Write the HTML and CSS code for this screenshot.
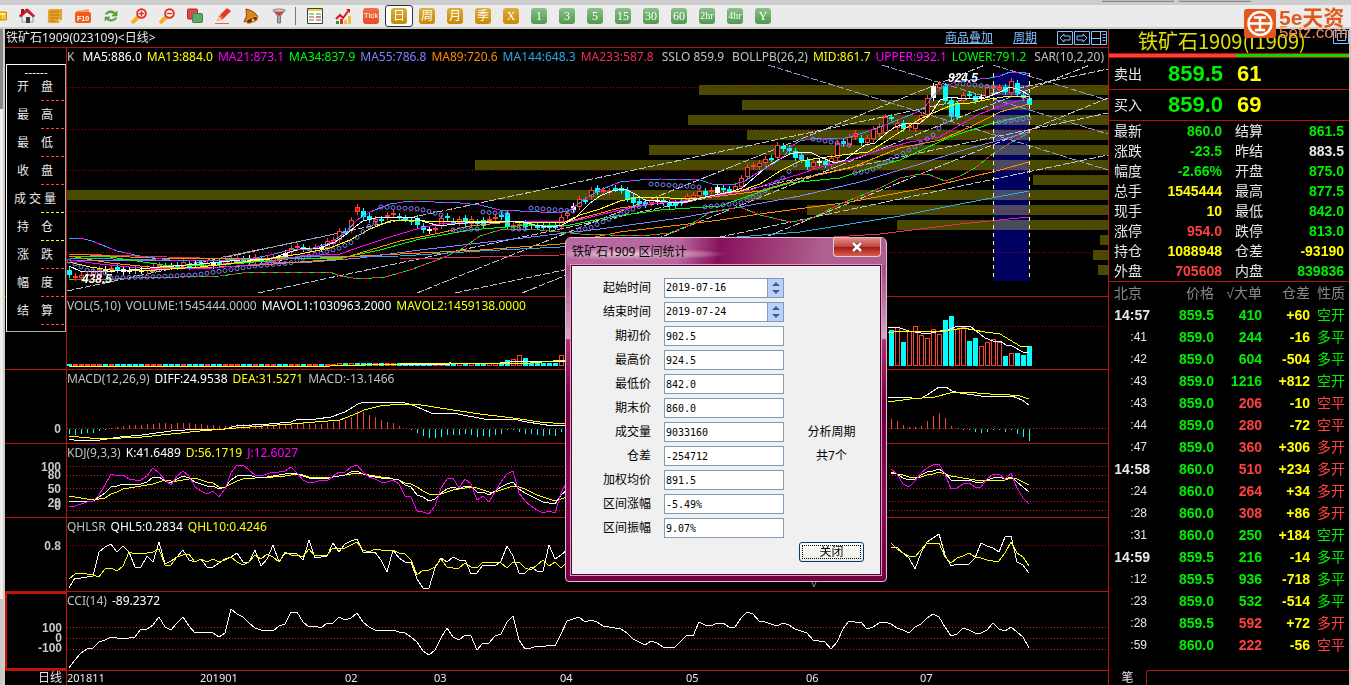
FILE: index.html
```html
<!DOCTYPE html>
<html lang="zh-CN">
<head>
<meta charset="utf-8">
<title>铁矿石1909</title>
<link rel="stylesheet" href="styles.css">
</head>
<body>
<header class="chrome"><span class="chrome-tab"></span><span class="chrome-tab"></span></header>
<nav class="toolbar">
  <svg class="back" width="7" height="14" viewBox="0 0 7 14"><path d="M0 3h6.500v8H0z" fill="#f8c830" stroke="#c08a10"/><path d="M0 5h5" stroke="#fff080" stroke-width="2"/></svg>
  <button class="tool"><svg viewBox="0 0 16 16"><path d="M3 8v6h11V8L8 3z" fill="#eceff2" stroke="#99a"/><path d="M0 8 7 1l2 0 7 7-2 1-6-5-6 5z" fill="#d42030" stroke="#9c1020" stroke-width=".5"/><path d="M2 1h3v4l-3 2z" fill="#b01020"/><path d="M7 9h4v6H7z" fill="#403838"/></svg></button>
  <button class="tool"><svg viewBox="0 0 16 16"><path d="M2 1h12q2 0 1 3v7l-4 4H2q-2-1-1-4V3z" fill="#e8a428"/><path d="M3 4h9M3 7h9M3 10h8M3 13h5" stroke="#b87810"/><path d="m11 15 4-4h-4z" fill="#fff0b0" stroke="#b87810" stroke-width=".5"/></svg></button>
  <button class="tool"><svg viewBox="0 0 16 16"><path d="M1 3 14 1v3H1z" fill="#f8a070"/><rect y="4" width="16" height="11" rx="2" fill="#ee5c18"/><text class="f10" x="8" y="13" text-anchor="middle">F10</text></svg></button>
  <button class="tool"><svg viewBox="0 0 16 16"><path d="M2 6q5-6 11-1l1-2v5H9l2-2Q7 3 4 6zM14 10q-5 6-11 1l-1 2V9h5l-2 2q4 2 7-1z" fill="#5aa838" stroke="#38801c" stroke-width=".5"/></svg></button>
  <button class="tool"><svg viewBox="0 0 16 16"><path d="m1 15 6-6" stroke="#f8b020" stroke-width="4"/><circle cx="10.500" cy="5.500" r="4.300" fill="#fff" stroke="#e03028" stroke-width="2"/><path d="M8 5.500h5M10.500 3v5" stroke="#e03028" stroke-width="1.500"/></svg></button>
  <button class="tool"><svg viewBox="0 0 16 16"><path d="m1 15 6-6" stroke="#f8b020" stroke-width="4"/><circle cx="10.500" cy="5.500" r="4.300" fill="#fff" stroke="#e03028" stroke-width="2"/><path d="M8 5.500h5" stroke="#e03028" stroke-width="1.500"/></svg></button>
  <button class="tool"><svg viewBox="0 0 16 16"><rect x=".5" y="1" width="10" height="10" rx="1" fill="#e04848" stroke="#b02828"/><rect x="5.500" y="5.500" width="10" height="9" rx="1" fill="#60a868" stroke="#3c8048"/></svg></button>
  <button class="tool"><svg viewBox="0 0 16 16"><path d="m2 13 2-5 8-8 4 3-8 8z" fill="#e83820"/><path d="m5 7 3 3" stroke="#fa9080"/><path d="m2 13 2-5 3 3z" fill="#f8d090"/><path d="M0 15.500h14" stroke="#f06050"/></svg></button>
  <button class="tool"><svg viewBox="0 0 16 16"><path d="M3 1q9 2 12 8L1 14Q5 8 3 1z" fill="#d88420" stroke="#884008"/><ellipse cx="9" cy="12" rx="6" ry="2.500" transform="rotate(-22 9 12)" fill="#702c08" stroke="#e8a030"/><circle cx="10" cy="12" r="1.500" fill="#ffc850"/></svg></button>
  <button class="tool"><svg viewBox="0 0 16 16"><path d="M2 2h12L9.500 8v7h-3V8z" fill="#a8adb0" stroke="#70787c"/><path d="M3 3h10L8 8z" fill="#e02830"/><ellipse cx="8" cy="2.500" rx="6" ry="1.500" fill="#e8c0c0" stroke="#888"/></svg></button>
  <span class="sep"></span>
  <button class="tool"><svg viewBox="0 0 16 16"><path d="M.500.500h15v15H.500z" fill="#fff" stroke="#344"/><path d="M1 2h14" stroke="#f8d030" stroke-width="2"/><path d="M2 6h5M2 12h5M9 6h5" stroke="#30a030"/><path d="M2 9h5M9 12h5" stroke="#d03030"/><path d="M9 9h5" stroke="#333"/></svg></button>
  <button class="tool"><svg viewBox="0 0 16 16"><path d="M1 13h3v3H1z" fill="#309030"/><path d="M5 11h3v5H5z" fill="#d83030"/><path d="M9 12h3v4H9zM13 8h3v8h-3z" fill="#f0c040"/><path d="m1 11 4-4 3 3 6-8" fill="none" stroke="#e01818" stroke-width="2"/><path d="M11 1h4v4z" fill="#e01818"/></svg></button>
  <button class="tool"><span class="badge tick">Tick</span></button>
  <button class="tool active"><span class="badge gold">日</span></button>
  <button class="tool"><span class="badge gold">周</span></button>
  <button class="tool"><span class="badge gold">月</span></button>
  <button class="tool"><span class="badge gold">季</span></button>
  <button class="tool"><span class="badge gold">X</span></button>
  <button class="tool"><span class="badge">1</span></button>
  <button class="tool"><span class="badge">3</span></button>
  <button class="tool"><span class="badge">5</span></button>
  <button class="tool"><span class="badge">15</span></button>
  <button class="tool"><span class="badge">30</span></button>
  <button class="tool"><span class="badge">60</span></button>
  <button class="tool"><span class="badge small">2hr</span></button>
  <button class="tool"><span class="badge small">4hr</span></button>
  <button class="tool"><span class="badge">Y</span></button>
</nav>
<div class="workspace">
  <div class="edge"></div>
  <main class="charts">
    <div class="titlebar">
      <h1>铁矿石1909(023109)&lt;日线&gt;</h1>
      <a href="#overlay">商品叠加</a>
      <a href="#period">周期</a>
      <span class="winicons">
        <svg width="50" height="14" viewBox="0 0 50 14" fill="none" stroke="#80c0ff"><path d="M.500.500h15v13H.500zM17.500.500h15v13h-15zM34.500.500h15v13h-15z"/><path d="m3 7 4-4v2h6v4H7v2zM30 7l-4-4v2h-6v4h6v2zM34 7.500h9M43.500 0v14M45.500 3.500h3M45.500 6.500h3M45.500 9.500h3"/></svg>
      </span>
    </div>

    <section class="pane price">
      <div class="axis"></div>
      <div class="plot">
        <svg id="price" viewBox="67 48 1041 248" preserveAspectRatio="none">
          <g fill="#4a4a00">
            <rect x="699" y="85" width="409" height="10"/><rect x="742" y="100" width="366" height="10"/><rect x="688" y="115" width="420" height="10"/><rect x="747" y="130" width="361" height="10"/><rect x="649" y="145" width="459" height="10"/><rect x="475" y="160" width="633" height="10"/><rect x="1033" y="175" width="75" height="10"/><rect x="67" y="190" width="1041" height="10"/><rect x="807" y="205" width="301" height="10"/><rect x="897" y="220" width="211" height="10"/><rect x="1100" y="235" width="8" height="10"/><rect x="1093" y="250" width="15" height="10"/><rect x="1098" y="265" width="10" height="10"/>
          </g>
          <rect class="range" x="993" y="73" width="36" height="208"/>
          <path class="grid dim" d="M67 87.500H1108M67 129.500H1108M67 170.500H1108M67 211.500H1108M67 252.500H1108"/>
          <g class="trend">
            <path d="M67 291 1108 69M258 293 1108 113M417 293 985 65M455 293 1108 155M522 293 1090 65M768 236 1108 98"/>
            <path d="M768 65 1108 170M882 65 1108 134M993 65 1107 100M150 272 350 231"/>
          </g>
          <g id="candles"></g>
          <g class="lines">
            <path stroke="#e03058" d="M69 254 200 258 300 259 400 259 560 255 880 234 960 224 1029 217"/>
            <path stroke="#30a8e0" d="M69 258 200 261 300 257 400 256 480 251 560 247 700 240 800 232 900 216 960 204 1029 191"/>
            <path stroke="#ff8800" d="M69 254 150 258 300 259 400 254 480 250 560 244 620 232 680 225 720 220 760 214 850 202 930 187 1000 170 1029 162"/>
            <path stroke="#8080ff" d="M69 260 200 260 300 263 360 258 420 250 480 243 540 236 600 229 680 218 740 207 800 196 860 182 920 164 960 151 1000 140 1029 132"/>
            <path stroke="#e03058" d="M69 279 100 280 130 278 180 277 220 276 250 272 330 272 340 276 360 279 385 277 410 270 440 259 460 250 480 236 500 230 530 229 560 232 580 234 640 236 670 233 690 225 710 212 740 207 760 215 790 222 810 219 840 204 880 188 900 178 920 174 930 175 945 181 960 176 975 168 990 156 1010 143 1029 133"/>
            <path stroke="#00ff00" stroke-dasharray="5 7" d="M69 279 100 280 130 278 180 277 220 276 250 272 330 272 340 276 360 279 385 277 410 270 440 259 460 250 480 236 500 230 530 229 560 232 580 234 640 236 670 233 690 225 710 212 740 207 760 215 790 222 810 219 840 204 880 188 900 178 920 174 930 175 945 181 960 176 975 168 990 156 1010 143 1029 133"/>
            <path stroke="#00ff00" d="M69 256 110 257 170 266 220 265 300 258 340 258 380 250 420 239 470 230 530 225 570 225 610 217 660 210 720 206 760 192 790 183 840 178 870 168 900 160 950 137 990 124 1029 115"/>
            <path stroke="#ff9000" d="M69 256 110 263 150 267 200 268 260 265 340 259 370 250 400 241 440 233 470 226 510 222 570 221 620 208 680 201 720 196 760 191 800 179 850 168 900 148 940 140 970 127 1000 112 1029 104"/>
            <path stroke="#ff00ff" d="M69 260 100 264 140 268 200 269 260 264 300 256 340 254 360 247 390 237 420 228 440 224 500 221 570 222 620 210 650 204 690 200 720 195 750 190 780 180 800 174 820 167 850 160 880 150 910 142 940 137 960 125 980 114 1000 106 1029 98"/>
            <path stroke="#ffff00" d="M69 262 90 267 110 270 140 271 200 267 260 260 300 254 330 248 350 240 370 229 390 221 410 220 440 222 490 221 540 223 565 222 580 215 600 209 620 201 640 197 670 198 700 198 725 193 740 191 760 184 780 171 800 161 820 158 850 154 868 152 880 145 900 132 920 119 940 110 955 104 970 103 990 99 1010 96 1029 97"/>
            <path stroke="#ffffff" d="M69 266 80 271 100 272 130 270 160 267 200 264 240 260 270 259 290 252 300 249 320 248 335 242 348 233 355 227 363 221 375 218 400 217 415 218 425 222 440 226 455 224 475 222 500 222 520 221 535 225 550 227 562 225 575 218 590 203 600 196 612 191 625 189 635 194 645 200 680 203 710 196 730 192 742 188 755 177 765 168 778 160 790 154 800 152 810 152 820 157 835 163 845 160 855 152 865 145 875 143 885 134 895 127 905 124 920 123 930 115 940 100 950 97 965 99 985 98 1000 92 1010 87 1020 90 1029 95"/>
            <path stroke="#ff00ff" d="M69 238 80 238 92 241 117 251 140 256 170 260 210 261 250 259 270 255 290 250 310 249 330 243 345 233 357 220 370 212 390 204 410 201 460 203 480 205 500 210 520 211 560 213 570 210 585 199 600 190 620 182 640 180 660 179 700 180 712 184 735 184 745 181 760 171 775 163 785 155 790 147 800 141 815 138 845 138 860 134 880 127 900 119 915 113 925 107 932 97 940 89 955 82 970 80 990 78 1000 76 1010 72 1022 72 1029 74"/>
            <path stroke="#30a0ff" stroke-dasharray="10 6" d="M69 238 80 238 92 241 117 251 140 256 170 260 210 261 250 259 270 255 290 250 310 249 330 243 345 233 357 220 370 212 390 204 410 201 460 203 480 205 500 210 520 211 560 213 570 210 585 199 600 190 620 182 640 180 660 179 700 180 712 184 735 184 745 181 760 171 775 163 785 155 790 147 800 141 815 138 845 138 860 134 880 127 900 119 915 113 925 107 932 97 940 89 955 82 970 80 990 78 1000 76 1010 72 1022 72 1029 74"/>
          </g>
          <g id="sar"></g>
          <path class="range-edge" stroke="#ffff80" d="M993.500 73V281M1029.500 73V281"/>
          <text class="mark" x="82" y="283">438.5</text>
          <text class="mark" x="948" y="82">924.5</text>
        </svg>
        <p class="legend"><span class="lead">K</span><span class="white">MA5:886.0</span><span class="yellow">MA13:884.0</span><span class="magenta">MA21:873.1</span><span class="lime">MA34:837.9</span><span class="violet">MA55:786.8</span><span class="orange">MA89:720.6</span><span class="blue">MA144:648.3</span><span class="rose">MA233:587.8</span><span class="sub">SSLO 859.9</span><span class="sub">BOLLPB(26,2)</span><span class="yellow">MID:861.7</span><span class="magenta">UPPER:932.1</span><span class="lime">LOWER:791.2</span><span class="sub">SAR(10,2,20)</span></p>
      </div>
    </section>

    <section class="pane">
      <div class="axis"></div>
      <div class="plot">
        <svg viewBox="67 297 1041 72" preserveAspectRatio="none">
          <path class="grid dim" d="M67 326.500H1108"/>
          <g id="volume"></g>
          <g class="lines">
            <path stroke="#fff" d="M69 366H330L400 364H450L500 363 520 361 540 361 565 361M888 328 897 327 909 331 927 334 940 331 948 330 957 326 970 326 980 334 985 338 993 341 1000 341 1006 345 1012 346 1023 352 1029 353"/>
            <path stroke="#ff0" d="M69 366H330L400 364 450 363 500 364 530 363 565 360M888 333 900 331 920 331 940 332 963 328 985 332 1000 334 1010 340 1020 346 1029 347"/>
          </g>
        </svg>
        <p class="legend"><span>VOL(5,10)</span><span>VOLUME:1545444.0000</span><span class="white">MAVOL1:1030963.2000</span><span class="yellow">MAVOL2:1459138.0000</span></p>
      </div>
    </section>

    <section class="pane">
      <div class="axis"><svg><text x="56" y="86%">0</text></svg></div>
      <div class="plot">
        <svg viewBox="67 370 1041 73" preserveAspectRatio="none">
          <path class="grid" d="M67 428.500H1108"/>
          <g id="macd"></g>
          <g class="lines">
            <path stroke="#fff" d="M69 439 74 440H100L120 437 142 435 171 431 200 429H225L236 426 269 424 291 422 298 419 316 419 331 417 345 412 358 404 364 402H402L415 406 431 413H453L489 420 513 419 527 422 553 426 565 425M888 397H900L912 398H922L930 393 939 387H946L952 391 960 393 981 396H1012L1022 400 1029 405"/>
            <path stroke="#ff0" d="M69 436 100 439 142 437 200 431 236 428 291 424 340 420 358 413 364 410 380 406 400 404H415L440 408 480 414 513 418 540 422 565 424M888 402 910 399 935 397 950 393 963 392 990 394 1010 395 1020 396 1029 399"/>
          </g>
        </svg>
        <p class="legend"><span>MACD(12,26,9)</span><span class="white">DIFF:24.9538</span><span class="yellow">DEA:31.5271</span><span>MACD:-13.1466</span></p>
      </div>
    </section>

    <section class="pane">
      <div class="axis"><svg><text x="56" y="37%">100</text><text x="56" y="48%">80</text><text x="56" y="67%">50</text><text x="56" y="86%">20</text><text x="56" y="90%">0</text></svg></div>
      <div class="plot">
        <svg id="kdj" viewBox="67 444 1041 73" preserveAspectRatio="none">
          <path class="grid" d="M67 466.500H1108M67 475.500H1108M67 488.500H1108M67 501.500H1108M67 510.500H1108"/>
        </svg>
        <p class="legend"><span>KDJ(9,3,3)</span><span class="white">K:41.6489</span><span class="yellow">D:56.1719</span><span class="magenta">J:12.6027</span></p>
      </div>
    </section>

    <section class="pane">
      <div class="axis"><svg><text x="56" y="44%">0.8</text></svg></div>
      <div class="plot">
        <svg id="qhl" viewBox="67 518 1041 73" preserveAspectRatio="none">
          <path class="grid dim" d="M67 545.500H1108"/>
          <path d="m812 582 2 5 2-5" fill="none" stroke="#888"/>
        </svg>
        <p class="legend"><span>QHLSR</span><span class="white">QHL5:0.2834</span><span class="yellow">QHL10:0.4246</span></p>
      </div>
    </section>

    <section class="pane selected">
      <div class="axis"><svg><text x="55" y="51%">100</text><text x="55" y="65%">0</text><text x="55" y="79%">-100</text></svg></div>
      <div class="plot">
        <svg id="cci" viewBox="67 592 1041 78" preserveAspectRatio="none">
          <path class="grid" d="M67 627.500H1108M67 638.500H1108M67 649.500H1108"/>
        </svg>
        <p class="legend"><span>CCI(14)</span><span class="white">-89.2372</span></p>
      </div>
    </section>

    <footer class="timeline">
      <span class="unit">日线</span>
      <div class="months"><span>201811</span><span>201901</span><span>02</span><span>03</span><span>04</span><span>05</span><span>06</span><span>07</span></div>
    </footer>

    <aside class="readout">
      <p class="dashes">------</p>
      <dl>
        <div><dt><span>开</span><span>盘</span></dt><dd></dd></div>
        <div><dt><span>最</span><span>高</span></dt><dd></dd></div>
        <div><dt><span>最</span><span>低</span></dt><dd></dd></div>
        <div><dt><span>收</span><span>盘</span></dt><dd></dd></div>
        <div><dt class="three"><span>成</span><span>交</span><span>量</span></dt><dd class="y"></dd></div>
        <div><dt><span>持</span><span>仓</span></dt><dd class="y"></dd></div>
        <div><dt><span>涨</span><span>跌</span></dt><dd></dd></div>
        <div><dt><span>幅</span><span>度</span></dt><dd></dd></div>
        <div><dt><span>结</span><span>算</span></dt><dd></dd></div>
      </dl>
    </aside>

    <section class="dialog" role="dialog" aria-labelledby="dlg-title">
      <header>
        <h2 id="dlg-title">铁矿石1909 区间统计</h2>
        <button class="close"><svg width="12" height="10" viewBox="0 0 12 10"><path d="m2 1 8 8M10 1 2 9" stroke="#603038" stroke-width="4"/><path d="m2 1 8 8M10 1 2 9" stroke="#fff" stroke-width="2.500"/></svg></button>
      </header>
      <form>
        <label for="f1">起始时间</label><div class="spin"><input id="f1" value="2019-07-16"><button type="button"><svg width="8" height="14" viewBox="0 0 8 14"><path d="m0 5 4-4 4 4zM0 9h8l-4 4z" fill="#4d6185"/></svg></button></div>
        <label for="f2">结束时间</label><div class="spin"><input id="f2" value="2019-07-24"><button type="button"><svg width="8" height="14" viewBox="0 0 8 14"><path d="m0 5 4-4 4 4zM0 9h8l-4 4z" fill="#4d6185"/></svg></button></div>
        <label for="f3">期初价</label><input id="f3" value="902.5">
        <label for="f4">最高价</label><input id="f4" value="924.5">
        <label for="f5">最低价</label><input id="f5" value="842.0">
        <label for="f6">期末价</label><input id="f6" value="860.0">
        <label for="f7">成交量</label><input id="f7" value="9033160"><span class="note">分析周期</span>
        <label for="f8">仓差</label><input id="f8" value="-254712"><span class="note">共7个</span>
        <label for="f9">加权均价</label><input id="f9" value="891.5">
        <label for="f10">区间涨幅</label><input id="f10" value="-5.49%">
        <label for="f11">区间振幅</label><input id="f11" value="9.07%">
        <button type="button" class="ok">关闭</button>
      </form>
    </section>
  </main>

  <aside class="quote">
    <h2>铁矿石1909(i1909)</h2>
    <div class="ratio"><i></i><i></i></div>
    <div class="deal"><span>卖出</span><b class="g">859.5</b><b class="y">61</b></div>
    <div class="deal"><span>买入</span><b class="g">859.0</b><b class="y">69</b></div>
    <table class="info">
      <tr><th>最新</th><td class="g">860.0</td><th>结算</th><td class="g">861.5</td></tr>
      <tr><th>涨跌</th><td class="g">-23.5</td><th>昨结</th><td>883.5</td></tr>
      <tr><th>幅度</th><td class="g">-2.66%</td><th>开盘</th><td class="g">875.0</td></tr>
      <tr><th>总手</th><td class="y">1545444</td><th>最高</th><td class="g">877.5</td></tr>
      <tr><th>现手</th><td class="y">10</td><th>最低</th><td class="g">842.0</td></tr>
      <tr><th>涨停</th><td class="r">954.0</td><th>跌停</th><td class="g">813.0</td></tr>
      <tr><th>持仓</th><td class="y">1088948</td><th>仓差</th><td class="y">-93190</td></tr>
      <tr><th>外盘</th><td class="r">705608</td><th>内盘</th><td class="g">839836</td></tr>
    </table>
    <table class="ticks">
      <thead><tr><th>北京</th><th>价格</th><th>√大单</th><th>仓差</th><th>性质</th></tr></thead>
      <tbody>
      <tr class="buy min"><th>14:57</th><td>859.5</td><td>410</td><td>+60</td><td>空开</td></tr>
      <tr class="buy"><th>:41</th><td>859.0</td><td>244</td><td>-16</td><td>多平</td></tr>
      <tr class="buy"><th>:42</th><td>859.0</td><td>604</td><td>-504</td><td>多平</td></tr>
      <tr class="buy"><th>:43</th><td>859.0</td><td>1216</td><td>+812</td><td>空开</td></tr>
      <tr><th>:43</th><td>859.0</td><td>206</td><td>-10</td><td>空平</td></tr>
      <tr><th>:44</th><td>859.0</td><td>280</td><td>-72</td><td>空平</td></tr>
      <tr><th>:47</th><td>859.0</td><td>360</td><td>+306</td><td>多开</td></tr>
      <tr class="min"><th>14:58</th><td>860.0</td><td>510</td><td>+234</td><td>多开</td></tr>
      <tr><th>:24</th><td>860.0</td><td>264</td><td>+34</td><td>多开</td></tr>
      <tr><th>:28</th><td>860.0</td><td>308</td><td>+86</td><td>多开</td></tr>
      <tr class="buy"><th>:31</th><td>860.0</td><td>250</td><td>+184</td><td>空开</td></tr>
      <tr class="buy min"><th>14:59</th><td>859.5</td><td>216</td><td>-14</td><td>多平</td></tr>
      <tr class="buy"><th>:12</th><td>859.5</td><td>936</td><td>-718</td><td>多平</td></tr>
      <tr class="buy"><th>:23</th><td>859.0</td><td>532</td><td>-514</td><td>多平</td></tr>
      <tr><th>:28</th><td>859.5</td><td>592</td><td>+72</td><td>多开</td></tr>
      <tr><th>:59</th><td>860.0</td><td>222</td><td>-56</td><td>空平</td></tr>
      </tbody>
    </table>
    <div class="tabs"><button>笔</button><span></span></div>
    <svg class="restore" width="16" height="14" viewBox="0 0 16 14" fill="none" stroke="#80c0ff"><path d="M.500.500h15v13H.500zM4.500 3.500h8v7h-8z"/></svg>
  </aside>
</div>

<div class="brand">
  <svg width="32" height="29" viewBox="0 0 32 29"><rect width="32" height="29" rx="3" fill="#e2581c"/><circle cx="16" cy="14.500" r="11.500" fill="none" stroke="#fff" stroke-width="2.500"/><path d="M10 8.500h12M5 14.500h22M16 9v13M11 21h10" stroke="#fff" stroke-width="2.500" fill="none"/></svg>
  <p><b>5e天资</b><span>5etz.com</span></p>
</div>
<script src="chart.js"></script>
</body>
</html>
```
FILE: styles.css
```css
* { box-sizing: border-box; }
body {
  margin: 0;
  min-height: 100vh;
  display: flex;
  flex-direction: column;
  background: #000;
  color: #e8e8e8;
  font: 12px/16px "Noto Sans", "Noto Sans CJK SC", sans-serif;
}
h1, h2, p, dl, dd { margin: 0; font-weight: normal; }
button { font: inherit; padding: 0; border: 0; background: none; color: inherit; }

.chrome { height: 5px; background: #cdcdcd; display: flex; justify-content: flex-end; gap: 5px; padding-right: 100px; }
.chrome-tab { width: 72px; height: 2px; background: #bbb; border-bottom: 1px solid #888; }
.toolbar { height: 24px; background: #ebebeb; border-bottom: 2px solid #d0ccc6; display: flex; align-items: center; }
.toolbar .back { margin-right: 6px; }
.tool { width: 28px; height: 22px; display: grid; place-items: center; }
.tool svg { width: 16px; height: 16px; }
.tool.active { background: #fff; border: 1px solid #333; border-radius: 3px; }
.sep { width: 1px; height: 18px; background: #777; margin: 0 5px 0 2px; }
.f10 { font: bold 7px "Liberation Sans", sans-serif; fill: #fff; }
.badge {
  width: 16px; height: 16px; border-radius: 3px;
  background: linear-gradient(#8cc08a, #4f9a4c);
  color: #fff; font: 12px/16px "Liberation Serif", "Noto Sans CJK SC", serif;
  display: flex; justify-content: center; white-space: nowrap;
}
.badge.gold { background: linear-gradient(#dcae40, #c88800); }
.badge.tick { background: linear-gradient(#f07048, #e84c20); font: 8px/16px "Liberation Sans", sans-serif; }
.badge.small { font-size: 10px; }

.workspace { flex: 1; display: grid; grid-template-columns: 5px 1fr 243px; }
.edge { background: linear-gradient(#888 0 80px, #eeece6 80px 570px, #c8c8c8 570px); border-right: 2px solid #d0ccc6; }

.charts {
  position: relative; min-width: 0;
  display: grid;
  grid-template-rows: 19px minmax(0, 249fr) minmax(0, 73fr) repeat(3, minmax(0, 74fr)) minmax(0, 79fr) 14px;
}
.titlebar { display: flex; align-items: center; gap: 20px; border-bottom: 1px solid #b41408; padding: 0 1px; }
.titlebar h1 { flex: 1; font-size: 12px; }
.titlebar a { color: #80c0ff; }
.winicons { display: flex; }

.pane { display: grid; grid-template: minmax(0, 1fr) / 62px 1fr; border-bottom: 1px solid #b41408; min-height: 0; min-width: 0; }
.axis { border-right: 1px solid #b41408; min-height: 0; display: grid; grid-template: minmax(0, 1fr) / minmax(0, 1fr); }
.selected .axis { border: 2px solid #c41408; border-right-width: 1px; }
.axis svg { width: 100%; height: 0; min-height: 100%; display: block; overflow: visible; }
.axis text { font: bold 12px "Liberation Sans", sans-serif; fill: #c8c8c8; text-anchor: end; }
.plot { display: grid; grid-template: minmax(0, 1fr) / minmax(0, 1fr); min-width: 0; min-height: 0; overflow: hidden; }
.plot > * { grid-area: 1 / 1; min-width: 0; }
.plot svg { width: 100%; height: 0; min-height: 100%; }
.legend { display: flex; gap: 5px; white-space: nowrap; padding-top: 1px; color: #c0c0c0; overflow: hidden; }
.legend .lead { margin-right: 3px; }
.legend .sub { margin-left: 3px; }
.white { color: #fff; }
.yellow { color: #ff0; }
.magenta { color: #f0f; }
.lime { color: #0f0; }
.violet { color: #8080ff; }
.orange { color: #ff8800; }
.blue { color: #30a8e0; }
.rose { color: #e83058; }

.grid { stroke: #d01810; stroke-dasharray: 1 2; fill: none; shape-rendering: crispEdges; }
.grid.dim { stroke: #a00; }
.lines path, .series { fill: none; stroke-width: 1; shape-rendering: crispEdges; }
.trend path { fill: none; stroke: #c0c0d0; stroke-dasharray: 7 2; shape-rendering: crispEdges; }
.trend path + path { stroke: #9898c8; }
.range { fill: #000060; mix-blend-mode: screen; }
.range-edge { stroke-dasharray: 4 4; shape-rendering: crispEdges; }
.mark { font: italic bold 12px "Liberation Sans", sans-serif; fill: #fff; }
#sar circle { fill: none; stroke: #8080ff; }
#candles, #volume, #macd { shape-rendering: crispEdges; }
.r-body { fill: #000; stroke: #ff4038; }
.c-body { fill: #0ff; stroke: #0ff; }
.w-body { fill: #fff; stroke: #fff; }

.timeline { display: grid; grid-template-columns: 62px 1fr; line-height: 14px; }
.unit { text-align: right; padding-right: 4px; border-right: 1px solid #b41408; }
.months { display: grid; grid-template-columns: 133fr 145fr 89fr 126fr 126fr 120fr 114fr 188fr; font-size: 11px; }

.readout {
  position: absolute; left: 1px; top: 35px; width: 60px; height: 268px;
  background: #000; border: 1px solid #fff; border-right-color: #aaa; border-bottom-color: #aaa;
}
.dashes { height: 14px; line-height: 16px; text-align: center; }
.readout dl div { height: 28px; display: flex; flex-direction: column; justify-content: space-between; }
.readout dt { display: flex; justify-content: center; gap: 12px; padding-right: 2px; }
.readout dt.three { gap: 3px; }
.readout dd { width: 23px; margin-left: 34px; border-bottom: 1px dashed #ff4038; margin-bottom: 6px; }
.readout dd.y { border-color: #ff0; }

.dialog {
  position: absolute; left: 560px; top: 208px; width: 322px;
  padding: 0 6px 6px; border: 1px solid #e8b8d4; border-radius: 6px 6px 4px 4px;
  background: linear-gradient(#b8689a 0, #a05088 30px, #d8a8c4 100px, #b03070 102px, #700040 170px, #8a1058 260px, #700040);
  color: #000;
}
.dialog header {
  height: 27px; margin: 0 -5px; padding: 0 4px 0 5px;
  display: flex; justify-content: space-between; align-items: center;
  background: radial-gradient(ellipse at 60px 16px, #eac8dc 0, #c888b0 60px, transparent 100px), linear-gradient(100deg, #b868a0 0 35%, #86105c 48%, #98306e 60%, #b06090 80%);
}
.dialog h2 { font-size: 12px; }
.close {
  width: 48px; height: 19px; align-self: flex-start; display: grid; place-items: center;
  border: 1px solid #f0c8d0; border-top: 0; border-radius: 0 0 4px 4px;
  background: linear-gradient(#dc9088, #c04038 50%, #a01810 50%, #d86050);
}
.dialog form {
  background: #f0f0f0; border: 1px solid #500030; outline: 1px solid #d8a0c0;
  margin: 0 -1px; padding: 12px 0 12px;
  display: grid; grid-template-columns: 79px 120px 65px; grid-auto-rows: 20px; row-gap: 4px;
}
.dialog label { grid-column: 1; text-align: right; line-height: 20px; }
.dialog form > input, .spin { grid-column: 2; margin-left: 13px; margin-right: -13px; }
.dialog form > input, .spin { border: 1px solid #7f9db9; background: #fff; min-width: 0; width: 120px; height: 20px; }
.dialog input { font: 10px/16px "DejaVu Sans Mono", monospace; padding: 0 1px; color: #000; }
.spin { display: flex; }
.spin input { border: 0; flex: 1; min-width: 0; background: none; }
.spin button { width: 16px; background: #b8d0fa; border-left: 1px solid #7f9db9; display: grid; place-items: center; }
.note, .ok { grid-column: 3; margin-left: 28px; margin-right: -28px; text-align: center; line-height: 20px; }
.ok {
  grid-row: 12;
  border: 1px solid #003c74; border-radius: 3px; line-height: 16px;
  background: linear-gradient(#fff, #eceae0); outline: 1px dotted #000; outline-offset: -4px;
}

.quote {
  position: relative;
  border-left: 1px solid #c41408; border-right: 2px solid #d4c4c4;
  display: flex; flex-direction: column;
  font: 14px/20px "Liberation Sans", "Noto Sans CJK SC", sans-serif;
}
.quote h2 { height: 24px; font: 20px/24px "Noto Sans CJK SC", sans-serif; color: #e0e000; padding-left: 29px; white-space: nowrap; }
.restore { position: absolute; right: 0; top: 1px; }
.ratio { display: grid; grid-template-columns: 53fr 47fr; height: 5px; border: 1px solid #b41408; border-left: 0; border-right: 0; }
.ratio i { background: #ff3c38; }
.ratio i + i { background: #00e000; }
.deal { display: grid; grid-template-columns: 54px 69px 1fr; height: 31px; padding-left: 5px; align-items: center; border-bottom: 1px solid #b41408; }
.ratio + .deal { height: 32px; }
.deal b { font-size: 22px; }
.g { color: #00ee00; }
.y { color: #ff0; }
.r { color: #ff4040; }
table { border-collapse: collapse; table-layout: fixed; }
th, td { padding: 0; white-space: nowrap; }
th { font-weight: normal; text-align: left; }
td { font-weight: bold; text-align: right; }
.info { margin: 0; width: 100%; }
.info td, .info th { height: 20px; line-height: 20px; }
.info th { padding-left: 5px; width: 33px; }
.info td { width: 80px; }
.info th:nth-child(3) { padding-left: 13px; width: 50px; }
.info td:last-child { padding-right: 5px; width: auto; }
.ticks { border-top: 1px solid #b41408; width: 100%; }
.ticks th, .ticks td { height: 22px; line-height: 22px; text-align: right; }
.ticks thead th { color: #888; }
.ticks th:first-child { width: 41px; font-size: 12px; padding-right: 3px; }
.ticks thead th:first-child { font-size: 14px; text-align: left; padding-left: 5px; }
.ticks th:nth-child(2) { width: 64px; }
.ticks th:nth-child(3), .ticks th:nth-child(4) { width: 48px; }
.ticks tbody .min th { font-weight: bold; font-size: 14px; padding-right: 0; }
.ticks tr :last-child { padding-right: 4px; font-weight: normal; }
.ticks td { color: #ff4040; }
.buy td, .ticks td:nth-child(2) { color: #00ee00; }
.ticks tr td:nth-child(4) { color: #ff0; }
.tabs { margin-top: auto; height: 15px; display: flex; align-items: stretch; }
.tabs button { width: 37px; font-size: 12px; line-height: 14px; }
.tabs span { flex: 1; border: 1px solid #b41408; border-width: 1px 0 0 1px; border-top-left-radius: 3px; }

.brand { position: absolute; right: 0; top: 9px; display: flex; gap: 3px; align-items: flex-start; color: #e2581c; }
.brand p { width: 72px; display: flex; flex-direction: column; }
.brand b { font: bold 21px/17px "Liberation Sans", "Noto Sans CJK SC", sans-serif; white-space: nowrap; }
.brand span { font: 17px/14px "Liberation Sans", sans-serif; color: #f08858; white-space: nowrap; }
```
FILE: chart.js
```js
const NS = 'http://www.w3.org/2000/svg';
const X0 = 69, STEP = 6;

function add(parent, tag, attrs) {
  const el = document.createElementNS(NS, tag);
  for (const k in attrs) el.setAttribute(k, attrs[k]);
  document.getElementById(parent).appendChild(el);
}

// values are thirds of a pixel below `base`
function series(parent, color, base, first, values) {
  const points = values.map((v, i) => `${X0 + (first + i) * STEP},${Math.round(base + v / 3)}`).join(' ');
  add(parent, 'polyline', { class: 'series', stroke: color, points });
}

const candles = `c270-275 r276-278 r275-278 r274-275 r271-275 r269-276 w269-271 r268-270 c267-270 w269-272 w270-271 c269-271 w270-271 r268-271 r267-270 r265-267 c266-268 w266-267 c265-267 r262-266
c264-267 w264-266 c263-264 r263-266 w263-266 c262-264 r260-264 r259-260 r258-261 c259-261 w258-262 r257-262 c259-262 r259-262 r257-262 w258-261 w253-257 r248-252 r246-248 c247-249
r249-250 r247-249 w247-249 r241-248 r240-244 r231-240 c231-232 r220-230 R207-212 c211-217 c216-220 r219-222 c219-221 r215-217 r213-214 c216-218 c218-219 c220-222 c218-225 c226-230
w229-231 r228-230 r218-226 c216-218 c221-222 r219-223 c218-224 r219-224 c222-223 c220-226 r219-221 r217-219 c215-217 c213-227 r225-227 r224-226 c223-227 c224-226 c226-227 c226-228
c226-227 c226-227 r217-227 r213-216 w206-210 r199-207 c200-201 r190-197 c188-192 r190-191 r191-192 c188-189 c188-191 c190-199 c197-203 c201-204 c202-205 r200-203 w200-202 c200-203
c203-206 c203-206 c201-203 r196-200 r195-198 r191-196 c191-195 r190-191 w187-193 c188-190 c189-192 r186-192 r178-187 r167-177 r165-167 r163-167 r159-163 c158-159 r145-158
c146-149 c148-151 c151-158 c155-160 c160-167 r162-167 w161-163 c161-165 r158-165 r143-158 c141-144 r137-145 R133-137 c138-143 r138-143 r129-139 r126-134 r117-133 c117-118 r123-128
c123-129 r126-128 r122-129 r115-120 r98-115 w86-98 r84-88 c86-101 c100-117 c104-117 r95-101 c94-96 c96-101 w97-98 r87-97 R86-88 R87-90 c87-92 r81-93 c83-93
c95-98 c98-105`.split(/\s+/);

candles.forEach((token, i) => {
  const [top, bottom] = token.slice(1).split('-').map(Number);
  const x = X0 + i * STEP;
  const kind = token[0] === 'R' ? 'r' : token[0];
  const cls = kind + '-body';
  add('candles', 'path', { class: cls, d: `M${x + .5} ${top - 3}V${bottom + 3}` });
  const attrs = { class: cls, x: x - 1.5, y: top + .5, width: 4, height: Math.max(bottom - top - 1, 1) };
  if (token[0] === 'R') attrs.style = 'fill:#f00';
  add('candles', 'rect', attrs);
});

const sar = [
  [[69, 261], [87, 270], [105, 273]], [[111, 278], [147, 277], [195, 275], [255, 266], [290, 263], [306, 257], [340, 248], [352, 242], [368, 227], [375, 223]],
  [[381, 207], [420, 209], [441, 215]], [[453, 230], [477, 229]], [[483, 212], [507, 214]], [[513, 229], [525, 229]],
  [[531, 208], [573, 211]], [[579, 230], [590, 228], [600, 223], [645, 204]], [[651, 184], [699, 187]],
  [[705, 207], [740, 203], [760, 194], [783, 178], [795, 165], [801, 158]], [[813, 139], [849, 145]],
  [[855, 173], [870, 171], [890, 160], [915, 147], [933, 135], [951, 115]], [[957, 83], [993, 87]], [[999, 122], [1029, 118]]
];
for (const run of sar) {
  for (let x = run[0][0]; x <= run[run.length - 1][0]; x += STEP) {
    const j = Math.max(1, run.findIndex(p => p[0] >= x));
    const [a, b] = [run[j - 1], run[j]];
    add('sar', 'circle', { cx: x, cy: a[1] + (b[1] - a[1]) * (x - a[0]) / (b[0] - a[0]), r: 2 });
  }
}

const volume = (i, top, kind) => add('volume', 'rect', { class: kind + '-body', x: X0 + i * STEP - 1.5, y: top + .5, width: 4, height: Math.max(365 - top, 0) });
for (let i = 0; i < 83; i++) {
  const peaks = { 73: 360, 74: 359, 75: 355, 76: 358, 82: 355 };
  const kind = candles[i][0] === 'r' ? 'r' : 'c';
  volume(i, peaks[i] || (i < 45 ? 364 : 363), kind);
}
'c330 r327 c342 r331 r326 r335 r338 r329 r334 c320 c316 r329 r327 c341 c338 r346 r342 r339 r342 c356 r353 c353 c355 c346'
  .split(' ').forEach((t, i) => volume(137 + i, +t.slice(1), t[0]));

const macd = (first, values) => values.forEach((v, i) => {
  if (v) add('macd', 'path', { stroke: v > 0 ? '#ff4038' : '#00ffff', d: `M${X0 + (first + i) * STEP + .5} 429v${-v}` });
});
macd(0, [-5, -6, -5, -4, -4, -2, -1, 1, 2, 3, 4, 4, 4, 5, 5, 6, 6, 5, 6, 6, 6, 5, 5, 4, 4, 3, 3, 4, 5, 5, 5, 5, 4, 4, 4, 5, 5, 6, 6, 6, 5, 5, 5, 6, 7, 8, 9, 12, 18, 17, 14, 12, 9, 7, 6, 3, 0, -1, -4, -7, -9, -9, -8, -6, -6, -6, -5, -6, -8, -7, -8, -6, -5, -1, -1, -3, -5, -5, -6, -7, -6, -7, -3]);
macd(137, [10, 8, 4, 2, 2, 3, 8, 13, 16, 11, 3, 1, -1, -1, -3, -4, -3, -1, -1, -3, -1, -5, -8, -12]);

series('kdj', '#ff0', 360, 0, [409, 411, 413, 416, 418, 418, 414, 402, 395, 387, 384, 382, 379, 376, 372, 365, 361, 363, 363, 359, 357, 355, 359, 365, 369, 380, 380, 373, 364, 358, 354, 353, 352, 352, 350, 349, 347, 344, 342, 346, 350, 351, 352, 352, 350, 349, 345, 341, 340, 342, 344, 347, 350, 352, 356, 360, 368, 372, 380, 392, 402, 405, 402, 396, 391, 387, 385, 381, 384, 390, 396, 397, 391, 385, 379, 381, 388, 396, 404, 410, 418, 422, 418, 410]);
series('kdj', '#fff', 360, 0, [422, 422, 422, 422, 422, 411, 400, 382, 379, 373, 373, 373, 372, 365, 352, 352, 363, 370, 356, 349, 353, 366, 372, 378, 379, 388, 381, 361, 349, 346, 346, 350, 352, 350, 348, 346, 343, 338, 341, 349, 355, 355, 355, 358, 351, 347, 345, 335, 332, 341, 347, 351, 354, 355, 356, 360, 375, 382, 406, 412, 424, 418, 400, 386, 380, 386, 377, 379, 397, 397, 406, 392, 380, 371, 365, 387, 400, 409, 417, 427, 428, 433, 405, 390]);
series('kdj', '#f0f', 360, 0, [441, 438, 432, 425, 422, 405, 375, 343, 349, 346, 356, 361, 361, 349, 325, 338, 360, 374, 348, 334, 348, 382, 392, 401, 394, 411, 387, 338, 316, 316, 331, 346, 349, 343, 337, 337, 332, 322, 338, 360, 370, 365, 359, 363, 348, 337, 335, 320, 316, 336, 352, 358, 367, 367, 361, 373, 407, 412, 454, 457, 463, 437, 385, 358, 355, 384, 358, 373, 419, 409, 427, 395, 366, 341, 334, 400, 424, 439, 449, 460, 453, 458, 400, 365]);
series('kdj', '#ff0', 290, 137, [550, 551, 556, 562, 562, 560, 556, 553, 547, 551, 558, 562, 564, 567, 571, 574, 571, 571, 570, 569, 565, 568, 577, 586]);
series('kdj', '#fff', 290, 137, [545, 552, 565, 571, 567, 556, 547, 544, 538, 550, 571, 574, 571, 571, 577, 580, 571, 565, 562, 568, 562, 577, 592, 607]);
series('kdj', '#f0f', 290, 137, [537, 553, 583, 592, 573, 548, 533, 526, 523, 553, 598, 595, 583, 579, 592, 592, 568, 553, 553, 568, 550, 595, 625, 643]);

series('qhl', '#fff', 360, 0, [683, 655, 655, 650, 647, 575, 562, 553, 577, 559, 575, 620, 622, 587, 607, 545, 612, 602, 590, 571, 600, 605, 596, 622, 622, 610, 597, 590, 580, 605, 607, 571, 619, 597, 556, 607, 579, 580, 583, 600, 541, 595, 590, 588, 550, 577, 553, 544, 538, 577, 577, 577, 600, 637, 571, 595, 607, 605, 658, 685, 685, 625, 595, 605, 592, 600, 601, 643, 640, 616, 616, 618, 604, 559, 587, 640, 638, 620, 632, 634, 556, 598, 585, 570]);
series('qhl', '#ff0', 360, 0, [658, 643, 640, 641, 645, 652, 628, 625, 632, 619, 575, 583, 580, 580, 575, 568, 614, 614, 592, 586, 583, 607, 596, 607, 598, 605, 600, 592, 605, 616, 605, 586, 598, 583, 590, 607, 577, 585, 585, 590, 568, 588, 586, 586, 565, 565, 565, 555, 547, 570, 577, 568, 569, 571, 571, 580, 583, 600, 646, 631, 631, 620, 598, 622, 625, 625, 610, 620, 625, 607, 606, 607, 610, 625, 607, 607, 625, 630, 615, 601, 618, 605, 625, 605]);
series('qhl', '#fff', 290, 137, [770, 770, 790, 805, 838, 790, 755, 745, 733, 795, 829, 823, 823, 823, 805, 760, 768, 775, 787, 742, 739, 817, 826, 850]);
series('qhl', '#ff0', 290, 137, [760, 778, 788, 797, 800, 780, 760, 760, 760, 800, 820, 803, 797, 790, 800, 803, 809, 812, 814, 790, 755, 790, 800, 829]);

series('cci', '#fff', 360, 0, [923, 900, 880, 866, 865, 847, 841, 832, 835, 835, 835, 832, 808, 808, 796, 772, 802, 811, 790, 772, 799, 820, 817, 817, 820, 832, 820, 748, 763, 772, 790, 805, 811, 811, 814, 799, 793, 757, 757, 787, 802, 799, 805, 790, 790, 772, 781, 775, 760, 787, 802, 811, 811, 811, 811, 817, 820, 832, 847, 874, 886, 871, 835, 805, 832, 841, 826, 829, 871, 850, 850, 829, 823, 787, 769, 841, 868, 865, 859, 862, 856, 859, 823, 784]);
series('cci', '#fff', 580, 83, [124, 118, 112, 127, 121, 127, 139, 142, 145, 148, 160, 178, 187, 196, 184, 190, 202, 205, 202, 182, 166, 169, 127, 136, 139, 130, 130, 142, 142, 115, 97, 103, 124, 127, 133, 139, 130, 136, 148, 154, 160, 181, 184, 187, 208, 187, 148, 124, 127, 127, 148]);
series('cci', '#fff', 290, 133, [1018, 1012, 1000, 997, 1003, 1015, 1021, 1030, 1012, 1003, 985, 973, 982, 1012, 1039, 1033, 1015, 1021, 1030, 1030, 1021, 1000, 1018, 1024, 1012, 1027, 1042, 1075]);
```
